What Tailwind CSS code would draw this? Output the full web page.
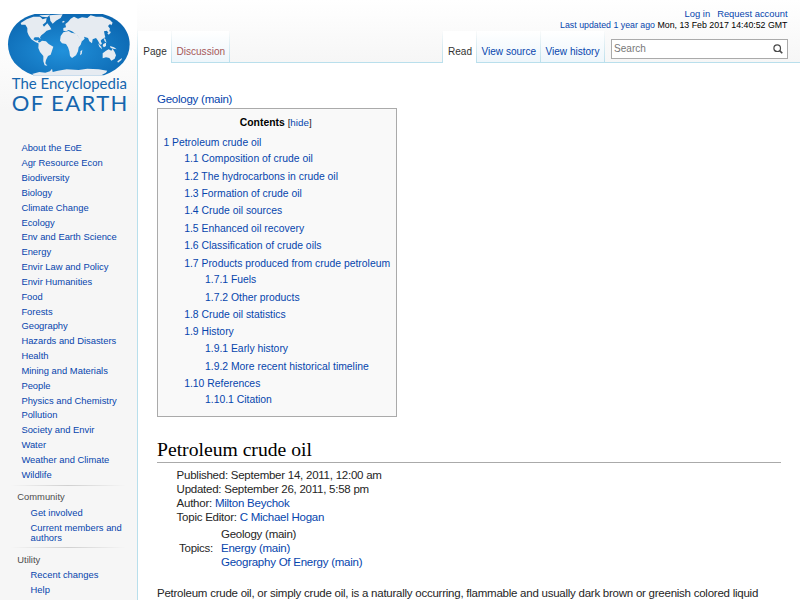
<!DOCTYPE html>
<html lang="en">
<head>
  <meta charset="UTF-8" />
  <meta name="viewport" content="width=device-width, initial-scale=1.0"/>
  <title>Petroleum crude oil - The Encyclopedia of Earth</title>
  <script src="https://cdn.jsdelivr.net/npm/@tailwindcss/browser@4"></script>
</head>
<body class="h-[600px] overflow-hidden bg-[#f6f6f6] font-['Liberation_Sans',sans-serif] text-[#252525]">
  <div class="flex h-full bg-linear-to-b from-white to-[#f6f6f6] bg-[length:100%_63px] bg-no-repeat">

    <!-- Sidebar -->
    <aside class="w-[137px] shrink-0 bg-[linear-gradient(#fff_30px,#f6f6f6_110px)] text-[9.38px] text-[#0645ad]">
      <a href="#" class="block pt-3">
        <svg class="h-[104px] w-[137px]" viewBox="0 36 411 312">
          <defs>
            <radialGradient id="sea" cx="0.45" cy="0.6" r="0.65">
              <stop offset="0" stop-color="#2191db"/>
              <stop offset="1" stop-color="#0b66b0"/>
            </radialGradient>
          </defs>
          <path fill="url(#sea)" d="M104 42H308C360 56 389 92 389 133C389 175 362 207 312 226H100C50 207 24 175 24 133C24 92 52 56 104 42Z"/>
          <g fill="#e6ebf1">
            <path d="M62 69L80 58L100 50L120 50L128 58L140 54L138 66L128 74L132 80L142 70L150 80L154 88L140 92L132 100L124 106L120 112L122 118L116 112L104 112L100 118L108 122L116 120L114 126L124 130L120 132L106 126L94 118L86 106L82 96L82 84L76 74L64 74Z"/>
            <path d="M118 46L150 44L142 52L126 50Z"/>
            <path d="M148 46L188 43L182 54L168 62L158 71L151 62L150 54Z"/>
            <path d="M116 130L126 122L138 124L146 132L160 140L156 152L152 164L144 168L138 180L136 190L142 197L134 196L130 184L130 168L120 156L115 144Z"/>
            <path d="M186 65L192 62L194 66L188 68Z"/>
            <path d="M190 92L190 84L198 82L196 72L204 66L212 56L222 50L234 56L246 52L262 54L272 46L288 50L306 50L330 60L338 68L334 76L330 72L324 78L330 86L326 98L320 92L312 94L314 104L316 112L306 118L302 122L306 132L300 134L294 122L288 114L278 118L276 130L268 124L264 114L252 110L254 116L246 124L240 120L232 106L224 100L216 94L206 90L198 94Z"/>
            <path d="M190 97L206 93L214 98L230 101L238 114L246 122L242 134L236 142L234 154L228 166L216 174L210 168L208 154L204 142L198 132L186 130L180 122L182 108Z"/>
            <path d="M242 154L247 149L245 162L240 166Z"/>
            <path d="M322 100L330 92L332 98L326 104Z"/>
            <path d="M294 130L304 140L306 148L298 140Z"/>
            <path d="M310 132L318 128L318 138L312 142L308 138Z"/>
            <path d="M330 138L342 142L350 148L340 146L332 144Z"/>
            <path d="M310 112L316 118L320 128L314 124Z"/>
            <path d="M308 160L318 152L326 148L334 152L338 146L344 156L348 166L344 176L334 182L328 174L318 172L308 175Z"/>
            <path d="M352 184L366 174L364 180L354 188Z"/>
            <path d="M96 222L118 216L136 218L150 214L156 206L158 216L174 212L200 208L236 210L262 206L296 208L322 212L318 218L304 226H102Z"/>
          </g>
          <text x="35" y="268" textLength="346" lengthAdjust="spacingAndGlyphs" fill="#1565ae" class="font-[Lato] text-[46px]">The Encyclopedia</text>
          <text x="35" y="332" textLength="347" lengthAdjust="spacing" fill="#1565ae" class="font-[Lato] text-[66px]">OF EARTH</text>
        </svg>
      </a>
      <ul class="mt-[25.3px] pl-[21.4px] leading-[14.85px]">
        <li><a href="#">About the EoE</a></li>
        <li><a href="#">Agr Resource Econ</a></li>
        <li><a href="#">Biodiversity</a></li>
        <li><a href="#">Biology</a></li>
        <li><a href="#">Climate Change</a></li>
        <li><a href="#">Ecology</a></li>
        <li><a href="#">Env and Earth Science</a></li>
        <li><a href="#">Energy</a></li>
        <li><a href="#">Envir Law and Policy</a></li>
        <li><a href="#">Envir Humanities</a></li>
        <li><a href="#">Food</a></li>
        <li><a href="#">Forests</a></li>
        <li><a href="#">Geography</a></li>
        <li><a href="#">Hazards and Disasters</a></li>
        <li><a href="#">Health</a></li>
        <li><a href="#">Mining and Materials</a></li>
        <li><a href="#">People</a></li>
        <li><a href="#">Physics and Chemistry</a></li>
        <li><a href="#">Pollution</a></li>
        <li><a href="#">Society and Envir</a></li>
        <li><a href="#">Water</a></li>
        <li><a href="#">Weather and Climate</a></li>
        <li><a href="#">Wildlife</a></li>
      </ul>
      <div class="mt-[2.2px] ml-[10px] h-px w-[116px] bg-linear-to-r from-transparent via-[#d0d0d0] to-transparent"></div>
      <h3 class="mt-[4.5px] pl-[17.3px] leading-[14px] text-[#4d4d4d]">Community</h3>
      <ul class="mt-[2.5px] pl-[30.6px] leading-[10px]">
        <li class="py-px"><a href="#">Get involved</a></li>
        <li class="mt-[3px] py-px">
          <a href="#">Current members and<br>authors</a>
        </li>
      </ul>
      <div class="mt-[3.5px] ml-[10px] h-px w-[116px] bg-linear-to-r from-transparent via-[#d0d0d0] to-transparent"></div>
      <h3 class="mt-[4.5px] pl-[17.3px] leading-[14px] text-[#4d4d4d]">Utility</h3>
      <ul class="mt-[1px] pl-[30.6px] leading-[14.85px]">
        <li><a href="#">Recent changes</a></li>
        <li><a href="#">Help</a></li>
      </ul>
    </aside>

    <div class="w-px shrink-0 bg-[linear-gradient(transparent_28px,#b9dfec_62px)]"></div>

    <div class="flex min-w-0 flex-1 flex-col">
      <!-- Header -->
      <header class="flex h-[63px] shrink-0 flex-col">
        <div class="pt-[9px] pr-[12.5px] text-right leading-[11px]">
          <div class="-mt-px mb-px text-[9.4px] text-[#0645ad]"><a href="#">Log in</a><a href="#" class="ml-[7px]">Request account</a></div>
          <div class="text-[8.8px] text-black"><a href="#" class="text-[#0645ad]">Last updated 1 year ago</a> Mon, 13 Feb 2017 14:40:52 GMT</div>
        </div>
        <div class="flex flex-1 text-[10.05px] leading-[12px] text-[#0645ad]">
          <nav class="flex">
            <a href="#" class="w-[33px] bg-white pt-[15px] pl-[5.3px] text-[#333]">Page</a>
            <div class="w-px bg-linear-to-b from-transparent to-[#b9dfec]"></div>
            <a href="#" class="w-[57px] border-b border-[#b9dfec] bg-linear-to-b from-white to-[#eef6fb] pt-[15px] pl-[4.5px] text-[#a55858]">Discussion</a>
            <div class="w-px bg-linear-to-b from-transparent to-[#b9dfec]"></div>
          </nav>
          <div class="flex-1 border-b border-[#b9dfec]"></div>
          <nav class="flex">
            <div class="w-px bg-linear-to-b from-transparent to-[#b9dfec]"></div>
            <a href="#" class="w-[33px] bg-white pt-[15px] pl-[5px] text-[#333]">Read</a>
            <div class="w-px bg-linear-to-b from-transparent to-[#b9dfec]"></div>
            <a href="#" class="w-[63px] border-b border-[#b9dfec] bg-linear-to-b from-white to-[#eef6fb] pt-[15px] pl-[4.5px]">View source</a>
            <div class="w-px bg-linear-to-b from-transparent to-[#b9dfec]"></div>
            <a href="#" class="w-[63px] border-b border-[#b9dfec] bg-linear-to-b from-white to-[#eef6fb] pt-[15px] pl-[4.5px]">View history</a>
            <div class="w-px bg-linear-to-b from-transparent to-[#b9dfec]"></div>
          </nav>
          <div class="w-[195px] border-b border-[#b9dfec] pt-[8px] pl-[6px]">
            <div class="flex h-[20px] w-[177px] items-center justify-between border border-[#aaa] bg-white pr-1 pl-[2px] text-[#777]">
              <span>Search</span>
              <svg class="size-[10px]" viewBox="0 0 10 10" fill="none" stroke="#4a4a4a">
                <circle cx="4.2" cy="4.2" r="3.3" stroke-width="1.2"/>
                <path d="M6.6 6.6L9.3 9.3" stroke-width="1.6"/>
              </svg>
            </div>
          </div>
        </div>
      </header>

      <!-- Article -->
      <main class="flex-1 bg-white pt-[29px] pr-[19px] pl-[19px] text-[11.5px] leading-[14px] tracking-[-0.245px]">
        <a href="#" class="block text-[#0645ad]">Geology (main)</a>

        <div class="mt-[2px] h-[309px] w-[240px] border border-[#aaa] bg-[#f9f9f9] pt-[7px] pl-[5.4px] text-[10.38px] leading-[17.35px] tracking-normal text-[#0645ad]">
          <div class="pr-[8px] text-center leading-[14px] text-black"><b>Contents</b> <span class="text-[9.8px] text-[#252525]">[<a href="#" class="text-[#0645ad]">hide</a>]</span></div>
          <ul class="mt-[4px] whitespace-nowrap">
            <li><a href="#">1 Petroleum crude oil</a>
              <ul class="-mt-[0.9px] pl-[20.8px]">
                <li><a href="#">1.1 Composition of crude oil</a></li>
                <li><a href="#">1.2 The hydrocarbons in crude oil</a></li>
                <li><a href="#">1.3 Formation of crude oil</a></li>
                <li><a href="#">1.4 Crude oil sources</a></li>
                <li><a href="#">1.5 Enhanced oil recovery</a></li>
                <li><a href="#">1.6 Classification of crude oils</a></li>
                <li><a href="#">1.7 Products produced from crude petroleum</a>
                  <ul class="-mt-[0.5px] pl-[20.8px]">
                    <li><a href="#">1.7.1 Fuels</a></li>
                    <li><a href="#">1.7.2 Other products</a></li>
                  </ul>
                </li>
                <li><a href="#">1.8 Crude oil statistics</a></li>
                <li><a href="#">1.9 History</a>
                  <ul class="-mt-[0.5px] pl-[20.8px]">
                    <li><a href="#">1.9.1 Early history</a></li>
                    <li><a href="#">1.9.2 More recent historical timeline</a></li>
                  </ul>
                </li>
                <li><a href="#">1.10 References</a>
                  <ul class="-mt-[0.8px] pl-[20.8px]">
                    <li><a href="#">1.10.1 Citation</a></li>
                  </ul>
                </li>
              </ul>
            </li>
          </ul>
        </div>

        <h1 class="mt-[20px] h-[26px] border-b border-[#aaa] font-['Liberation_Serif',serif] text-[19.65px] leading-[25px] tracking-normal text-black">Petroleum crude oil</h1>

        <div class="mt-[5px] pl-[19.6px]">
          <p>Published: September 14, 2011, 12:00 am</p>
          <p>Updated: September 26, 2011, 5:58 pm</p>
          <p>Author: <a href="#" class="text-[#0645ad]">Milton Beychok</a></p>
          <p>Topic Editor: <a href="#" class="text-[#0645ad]">C Michael Hogan</a></p>
          <div class="mt-[2.6px] flex items-center">
            <span class="w-[44.4px] pl-[2.4px]">Topics:</span>
            <div>
              <p>Geology (main)</p>
              <p class="text-[#0645ad]"><a href="#">Energy (main)</a></p>
              <p class="text-[#0645ad]"><a href="#">Geography Of Energy (main)</a></p>
            </div>
          </div>
        </div>

        <p class="mt-[17.4px] whitespace-nowrap">Petroleum crude oil, or simply crude oil, is a naturally occurring, flammable and usually dark brown or greenish colored liquid</p>
      </main>
    </div>
  </div>
</body>
</html>
